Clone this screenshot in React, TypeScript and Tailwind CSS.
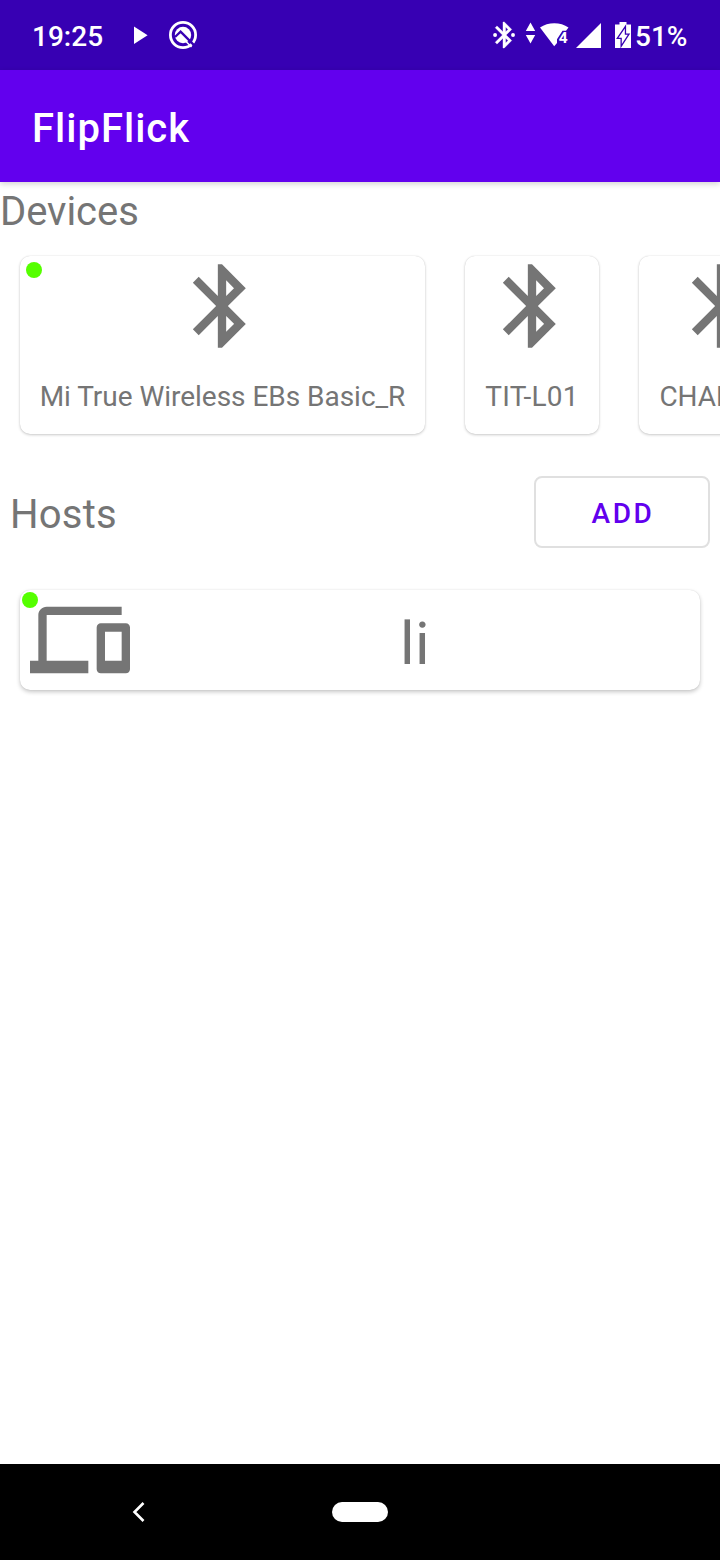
import React from "react";

const BT =
  "M17.71 7.71L12 2h-1v7.59L6.41 5 5 6.41 10.59 12 5 17.59 6.41 19 11 14.41V22h1l5.71-5.71-4.3-4.29 4.3-4.29zM13 5.83l1.88 1.88L13 9.59V5.83zm1.88 10.46L13 18.17v-3.76l1.88 1.88z";

function StatusBar() {
  return (
    <header className="flex h-[70px] shrink-0 items-center justify-between bg-[#3700b3] text-white">
      <div className="flex items-center">
        <span className="mt-[3px] ml-8 w-[80px] text-[28px] leading-8 font-medium">19:25</span>
        <svg className="h-[70px] w-24" viewBox="112 0 96 70" fill="currentColor">
          <path d="M134 26.5v17.5l13.6-8.8z" />
          <circle cx="183" cy="35" r="12.6" fill="none" stroke="currentColor" strokeWidth="2.8" />
          <circle cx="183" cy="35" r="8.2" />
          <path d="M175 37l5.600-5.300 14.400 14.400" fill="none" stroke="#3700b3" strokeWidth="2.3" />
          <path d="M186 41.500l5.500 5.500" fill="none" stroke="currentColor" strokeWidth="1.6" />
        </svg>
      </div>
      <div className="flex items-center">
        <svg className="h-[70px] w-[145px]" viewBox="490 0 145 70" fill="currentColor">
          <g transform="translate(488.7 19.4) scale(1.3)">
            <path d={BT} stroke="currentColor" strokeWidth="0.3" />
            <circle cx="4.9" cy="12" r="1.5" />
            <circle cx="18.7" cy="12" r="1.5" />
          </g>
          <path d="M530.5 22.5l4.7 8.5h-9.4zM530.5 43.5l-4.7-8.5h9.4z" />
          <path d="M540 27.600c8-5.700 20.600-5.700 28.500 0l-2.500 3.200h-3.500l-5.500 8.500v3.800l-2.800 3.200z" />
          <text x="558.800" y="43" fontSize="15.500" fontWeight="700" fontFamily="Roboto, sans-serif">4</text>
          <path d="M601 23v25h-25z" />
          <path d="M619.500 22h7v2.500h4.500v23.500h-16V24.500h4.500z" />
          <path
            d="M624.800 28.500l-6.300 9.300h3.300v6.200l6-9.300h-3z"
            stroke="#3700b3"
            strokeWidth="2.6"
            paintOrder="stroke"
          />
        </svg>
        <span className="mt-[3px] w-[85px] text-[28px] leading-8 font-medium">51%</span>
      </div>
    </header>
  );
}

function DeviceCard({ name, className, active }: { name: string; className: string; active?: boolean }) {
  return (
    <article
      className={`relative flex h-[178px] shrink-0 flex-col items-center rounded-[10px] bg-white shadow-[0_1px_3px_rgba(0,0,0,0.2),0_0_1px_rgba(0,0,0,0.16)] ${className}`}
    >
      {active && <i className="absolute top-[5.67px] left-[5.67px] size-[16.67px] rounded-full bg-[#55ff00]" />}
      <svg className="mr-px size-[100px]" viewBox="0 0 24 24" fill="currentColor">
        <path d={BT} />
      </svg>
      <span className="mt-6 text-[28px] leading-[33px] whitespace-nowrap">{name}</span>
    </article>
  );
}

export default function App() {
  return (
    <div className="flex h-[1560px] w-[720px] flex-col overflow-hidden bg-white font-[Roboto,sans-serif] text-[#757575]">
      <StatusBar />
      <div className="flex h-28 shrink-0 items-center bg-[#6200ee] pl-8 text-white shadow-[0_2px_6px_rgba(0,0,0,0.18)]">
        <h1 className="mt-1.5 text-[40px] leading-[48px] font-medium tracking-[1px]">FlipFlick</h1>
      </div>
      <main className="flex min-h-0 flex-1 flex-col">
        <h2 className="mt-[6px] h-12 text-[40px] leading-[48px] tracking-[-0.05px]">Devices</h2>
        <section className="mt-5 flex h-[178px] gap-10 pl-5">
          <DeviceCard name="Mi True Wireless EBs Basic_R" className="w-[405px] tracking-[-0.03px]" active />
          <DeviceCard name="TIT-L01" className="w-[134px] tracking-[0.25px]" />
          <DeviceCard name="CHARGE3" className="w-[165px] tracking-[-0.1px]" />
        </section>
        <div className="mt-[42px] flex h-[72px] items-center justify-between pr-2.5 pl-2.5">
          <h2 className="mt-1.5 text-[40px] leading-[48px] tracking-[0.25px]">Hosts</h2>
          <button className="h-[72px] w-44 rounded-lg border-2 border-[#e0e0e0] pt-1 pl-0.5 text-[28px] font-medium tracking-[2.7px] text-[#6200ee]">
            ADD
          </button>
        </div>
        <article className="relative mx-5 mt-[42px] flex h-[100px] items-center rounded-[10px] bg-white pl-2.5 shadow-[0_2px_4px_rgba(0,0,0,0.22),0_0_1px_rgba(0,0,0,0.16)]">
          <i className="absolute top-[1.67px] left-[1.67px] size-[16.67px] rounded-full bg-[#55ff00]" />
          <svg className="size-[100px]" viewBox="0 0 24 24" fill="currentColor">
            <path d="M4 6h18V4H4c-1.1 0-2 .9-2 2v11H0v3h14v-3H4V6zm19 2h-6c-.55 0-1 .45-1 1v10c0 .55.45 1 1 1h6c.55 0 1-.45 1-1V9c0-.55-.45-1-1-1zm-1 9h-4v-7h4v7z" />
          </svg>
          <span className="mt-2 flex-1 text-center text-[60px] leading-[70px] tracking-[0.5px]">li</span>
        </article>
      </main>
      <nav className="flex h-24 shrink-0 items-center bg-black">
        <svg className="ml-[128px] h-6 w-[204px]" viewBox="0 0 204 24" fill="none" stroke="white" strokeWidth="2.600">
          <path d="M15.500 3l-9 9 9 9" />
        </svg>
        <i className="h-5 w-14 rounded-full bg-white" />
      </nav>
    </div>
  );
}
